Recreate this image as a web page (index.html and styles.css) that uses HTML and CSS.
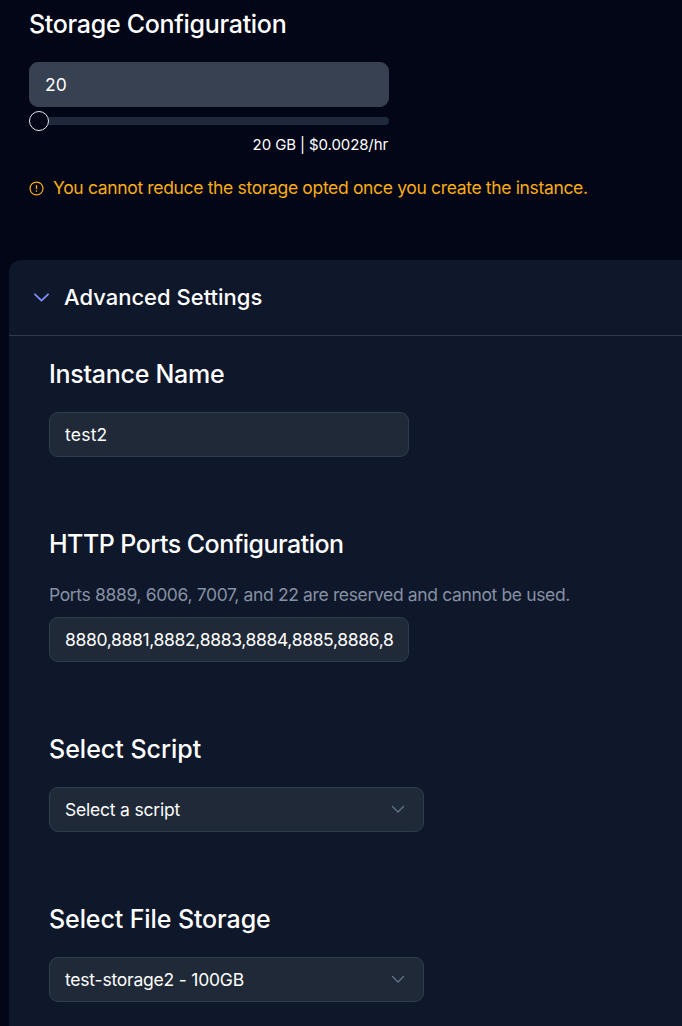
FILE: index.html
```html
<!DOCTYPE html>
<html lang="en">
<head>
<meta charset="utf-8">
<title>Storage Configuration</title>
<link rel="stylesheet" href="styles.css">
</head>
<body>
<main class="page">
  <section class="storage">
    <h2 class="heading storage-heading">Storage Configuration</h2>
    <div class="field field-active"><span class="value">20</span></div>
    <div class="slider"><span class="thumb"></span><span class="track"></span></div>
    <div class="price"><span class="price-text">20 GB | $0.0028/hr</span></div>
    <p class="warning">
      <svg class="warning-icon" viewBox="0 0 16 16" fill="none" stroke="currentColor"><circle cx="8" cy="8" r="6.900" stroke-width="1.300"/><path d="M8 4.400v4.200" stroke-width="1.400"/><path d="M8 10v1.500" stroke-width="1.400"/></svg>
      <span class="warning-text">You cannot reduce the storage opted once you create the instance.</span>
    </p>
  </section>
  <section class="panel">
    <header class="panel-header">
      <svg class="panel-chevron" viewBox="0 0 16 10" fill="none" stroke="currentColor" stroke-width="1.800" stroke-linecap="round" stroke-linejoin="round"><path d="M2 2.300L8.500 8.700l6.500-6.400"/></svg>
      <h2 class="panel-title">Advanced Settings</h2>
    </header>
    <div class="panel-body">
      <div class="group">
        <h2 class="heading name-heading">Instance Name</h2>
        <div class="field"><span class="value test-value">test2</span></div>
      </div>
      <div class="group group-ports">
        <h2 class="heading ports-heading">HTTP Ports Configuration</h2>
        <p class="hint">Ports 8889, 6006, 7007, and 22 are reserved and cannot be used.</p>
        <div class="field"><span class="value ports-value">8880,8881,8882,8883,8884,8885,8886,8</span></div>
      </div>
      <div class="group">
        <h2 class="heading script-heading">Select Script</h2>
        <div class="field select"><span class="value script-value">Select a script</span>
          <svg class="chevron" viewBox="0 0 14 9" fill="none" stroke="currentColor" stroke-width="1.300" stroke-linecap="round" stroke-linejoin="round"><path d="M1.500 1.500L7 7l5.500-5.500"/></svg></div>
      </div>
      <div class="group">
        <h2 class="heading file-heading">Select File Storage</h2>
        <div class="field select"><span class="value file-value">test-storage2 - 100GB</span>
          <svg class="chevron" viewBox="0 0 14 9" fill="none" stroke="currentColor" stroke-width="1.300" stroke-linecap="round" stroke-linejoin="round"><path d="M1.500 1.500L7 7l5.500-5.500"/></svg></div>
      </div>
    </div>
  </section>
</main>
</body>
</html>
```
FILE: styles.css
```css
* { box-sizing: border-box; }
body { margin: 0; background: #020617; color: #fff; font-family: Inter, "Liberation Sans", sans-serif; }
.page { height: 1026px; overflow: hidden; }
.storage { height: 260px; padding: 7px 0 0 29px; }
.heading { margin: 0; font-size: 25px; line-height: 35px; font-weight: 500; white-space: nowrap; }
.storage-heading { letter-spacing: -0.3px; }
.name-heading { letter-spacing: -0.28px; }
.ports-heading { letter-spacing: -0.52px; }
.file-heading { letter-spacing: -0.1px; }
.field { display: flex; align-items: center; width: 360px; height: 45px; padding: 0 13px 0 15px; border: 1px solid #303d4d; border-radius: 9px; background: #1f2937; }
.storage .field { margin-top: 20px; }
.field-active { background: #374151; border-color: #374151; }
.value { flex: 1; overflow: hidden; white-space: nowrap; font-size: 17.5px; line-height: 28px; font-weight: 400; }
.test-value { letter-spacing: 0.22px; }
.ports-value { letter-spacing: -0.34px; }
.script-value { letter-spacing: -0.2px; }
.file-value { letter-spacing: -0.21px; }
.slider { display: flex; align-items: center; width: 360px; height: 20px; margin-top: 4px; }
.thumb { width: 20px; height: 20px; border: 1px solid #e5e7eb; border-radius: 50%; }
.track { flex: 1; height: 8px; background: #1e293b; border-radius: 0 4px 4px 0; }
.price { display: flex; justify-content: flex-end; width: 359px; margin-top: 4px; font-size: 15px; line-height: 20px; letter-spacing: -0.1px; white-space: nowrap; }
.warning { display: flex; align-items: center; gap: 9px; margin: 19px 0 0; color: #faad14; font-size: 17.5px; line-height: 28px; letter-spacing: -0.34px; white-space: nowrap; }
.warning-icon { width: 15px; height: 15px; }
.panel { margin-left: 9px; height: 766px; background: #0f172a; border-radius: 12px 0 0 0; }
.panel-header { display: flex; align-items: center; gap: 15px; height: 76px; padding: 0 0 1px 24px; border-bottom: 1px solid #303a4c; }
.panel-chevron { width: 16px; height: 10px; color: #818cf8; }
.panel-title { margin: 0; font-size: 22px; line-height: 30px; font-weight: 500; white-space: nowrap; }
.panel-body { padding: 21px 0 0 40px; }
.group { height: 170px; }
.group-ports { height: 205px; }
.group .field { margin-top: 20px; }
.hint { margin: 19px 0 0; color: #8591a3; font-size: 17.5px; line-height: 28px; letter-spacing: -0.36px; white-space: nowrap; }
.group-ports .field { margin-top: 8px; }
.select { width: 375px; padding-right: 18px; }
.chevron { width: 14px; height: 9px; color: #64748b; }
```
